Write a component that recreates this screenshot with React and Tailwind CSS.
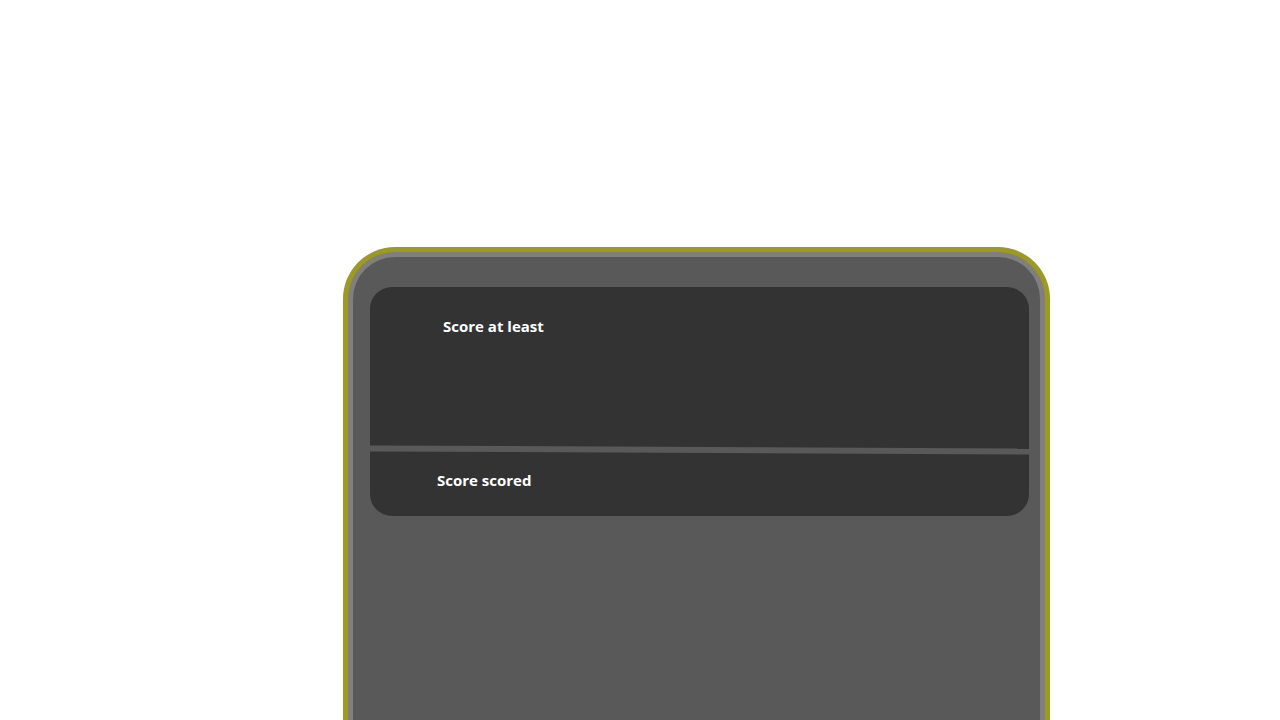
import React from 'react';

const App = () => {
  return (
    <div className="w-[1280px] h-[720px] overflow-hidden bg-white pt-[247px] pl-[343px]" style={{ fontFamily: '"Open Sans", "Noto Sans", sans-serif' }}>
      {/* Outer frame */}
      <div className="w-[707px] h-[600px] rounded-t-[52px] border-[5px] border-b-0 border-[#9c9a21] bg-[#9c9a21]">
        <div className="h-full rounded-t-[47px] border-[5px] border-b-0 border-[#7f7f7f] bg-[#595959] pl-[17px] pr-[12px] pt-[30px]">
          {/* Card */}
          <div className="relative w-[659px] rounded-[22px] bg-[#333333] overflow-hidden">
            <div className="h-[161px] pl-[73px] pt-[27px]">
              <span className="text-[15px] font-bold text-white">Score at least</span>
            </div>
            <div className="h-[6px]" />
            <div className="h-[62px] pl-[67px] pt-[14px]">
              <span className="text-[15px] font-bold text-white">Score scored</span>
            </div>
            {/* slanted divider */}
            <div className="absolute left-[-2px] top-[160px] w-[664px] h-[6px] bg-[#595959] rotate-[0.27deg]" />
          </div>
        </div>
      </div>
    </div>
  );
};

export default App;
